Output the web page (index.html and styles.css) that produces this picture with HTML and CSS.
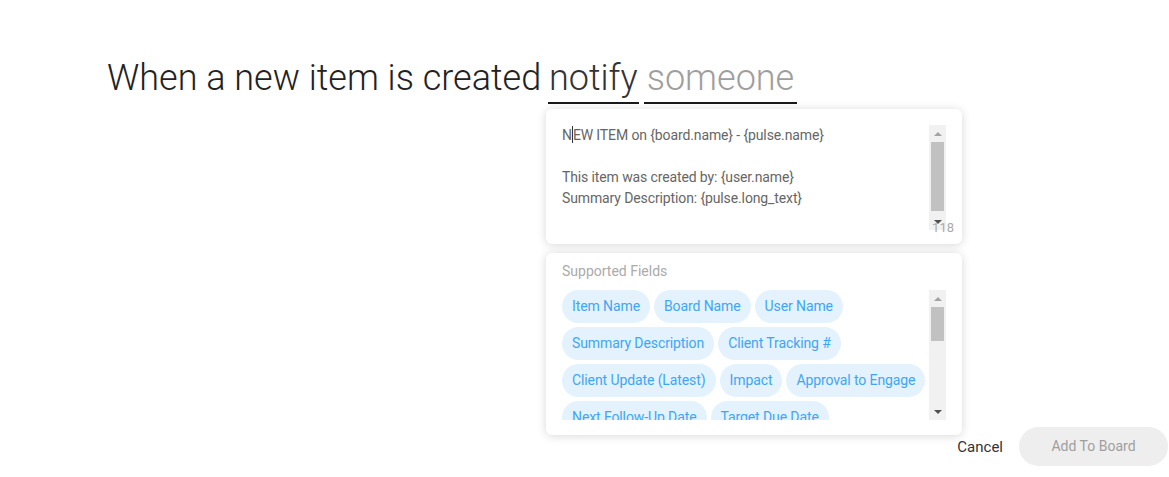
FILE: index.html
```html
<!DOCTYPE html>
<html lang="en">
  <head>
    <meta charset="UTF-8" />
    <title>Recipe</title>
    <link rel="stylesheet" href="styles.css">
  </head>
  <body>
    <div class="page">
      <h1 class="sentence">When a new item is created <span class="field filled">notify</span><span class="field empty">someone</span></h1>

      <div class="popup">
        <div class="card message">
          <div class="scrollArea">
            <div class="msgText">
              <p>N<span class="caret"></span>EW ITEM on {board.name} - {pulse.name}</p>
              <p>&nbsp;</p>
              <p>This item was created by: {user.name}</p>
              <p>Summary Description: {pulse.long_text}</p>
            </div>
            <div class="scrollbar">
              <div class="sbBtn"><span class="arrowUp"></span></div>
              <div class="sbTrack"><div class="thumb thumbLong"></div></div>
              <div class="sbBtn"><span class="arrowDown"></span></div>
            </div>
          </div>
          <span class="counter">118</span>
        </div>

        <div class="card fields">
          <div class="fieldsTitle">Supported Fields</div>
          <div class="scrollArea chipsArea">
            <ul class="chips">
              <li>Item Name</li>
              <li>Board Name</li>
              <li>User Name</li>
              <li>Summary Description</li>
              <li>Client Tracking #</li>
              <li>Client Update (Latest)</li>
              <li>Impact</li>
              <li>Approval to Engage</li>
              <li>Next Follow-Up Date</li>
              <li>Target Due Date</li>
              <li>Engagement Status</li>
              <li>Request Owner</li>
            </ul>
            <div class="scrollbar">
              <div class="sbBtn"><span class="arrowUp"></span></div>
              <div class="sbTrack"><div class="thumb thumbShort"></div></div>
              <div class="sbBtn"><span class="arrowDown"></span></div>
            </div>
          </div>
        </div>
      </div>

      <div class="footer">
        <span class="cancelBtn">Cancel</span>
        <span class="addBtn">Add To Board</span>
      </div>
    </div>
  </body>
</html>
```

FILE: styles.css
```css
html,
body,
h1,
p,
ul,
li {
  margin: 0px;
  padding: 0px;
}
li {
  list-style: none;
}
body {
  background-color: #fff;
  font-family: Roboto, "Liberation Sans", sans-serif;
  color: #333;
}
.page {
  position: relative;
  display: flex;
  flex-direction: column;
  min-height: 477px;
  box-sizing: border-box;
}
.sentence {
  margin: 57px 0 0 107px;
  font-size: 36px;
  font-weight: 300;
  line-height: normal;
  color: #222;
}
.field {
  display: inline-block;
  padding: 0 1px 3px;
  border-bottom: 2px solid #1a1a1a;
}
.filled {
  margin-left: -2px;
  color: #333;
}
.empty {
  margin-left: 5px;
  padding: 0 3px 3px 3px;
  color: #9e9e9e;
}

/* popup over the page */
.popup {
  position: absolute;
  left: 546px;
  top: 109px;
  width: 416px;
  display: flex;
  flex-direction: column;
  gap: 9px;
}
.card {
  position: relative;
  background-color: #fff;
  border-radius: 6px;
  box-shadow: 0 1px 10px rgba(0, 0, 0, 0.16);
}
.message {
  height: 135px;
  box-sizing: border-box;
  padding: 16px 16px 14px 16px;
}
.scrollArea {
  display: flex;
  height: 105px;
}
.msgText {
  flex: 1;
  font-size: 14px;
  line-height: 21px;
  letter-spacing: -0.12px;
  color: #666;
  overflow: hidden;
}
.caret {
  display: inline-block;
  width: 0;
  height: 17px;
  margin: 0 0 -3px 0;
  border-left: 1px solid #333;
}
.counter {
  position: absolute;
  right: 8px;
  bottom: 9px;
  font-size: 13px;
  line-height: 15px;
  color: #aaa;
}

/* fake scrollbar */
.scrollbar {
  display: flex;
  flex-direction: column;
  width: 17px;
  background-color: #f1f1f1;
}
.sbBtn {
  height: 17px;
  display: flex;
  align-items: center;
  justify-content: center;
}
.arrowUp {
  width: 0;
  height: 0;
  border-left: 4px solid transparent;
  border-right: 4px solid transparent;
  border-bottom: 4px solid #a3a3a3;
}
.arrowDown {
  width: 0;
  height: 0;
  border-left: 4px solid transparent;
  border-right: 4px solid transparent;
  border-top: 4px solid #505050;
}
.sbTrack {
  flex: 1;
  padding: 0 2px;
}
.thumb {
  background-color: #c1c1c1;
}
.thumbLong {
  height: 69px;
}
.thumbShort {
  height: 34px;
}

/* supported fields */
.fields {
  height: 182px;
  box-sizing: border-box;
  padding: 8px 16px 15px 16px;
}
.fieldsTitle {
  font-size: 14px;
  line-height: 20px;
  color: #aaa;
  margin-bottom: 9px;
}
.chipsArea {
  height: 130px;
}
.chips {
  flex: 1;
  display: flex;
  flex-wrap: wrap;
  align-content: flex-start;
  gap: 4px;
  overflow: hidden;
}
.chips li {
  height: 33px;
  line-height: 33px;
  padding: 0 10px;
  border-radius: 17px;
  background-color: #e3f2fd;
  color: #3fa6f5;
  font-size: 14px;
  letter-spacing: -0.1px;
  white-space: nowrap;
}

/* bottom buttons */
.footer {
  margin-top: auto;
  display: flex;
  justify-content: flex-end;
  align-items: center;
  gap: 16px;
  padding: 0 1px 11px 0;
  font-size: 14px;
}
.cancelBtn {
  font-size: 15px;
  color: #333;
  cursor: pointer;
}
.addBtn {
  width: 149px;
  height: 39px;
  line-height: 39px;
  text-align: center;
  border-radius: 20px;
  background-color: #eeeeee;
  color: #9e9e9e;
}
```
